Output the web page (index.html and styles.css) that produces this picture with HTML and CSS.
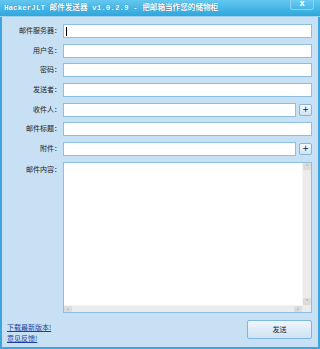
FILE: index.html
```html
<!DOCTYPE html>
<html lang="zh-CN">
<head>
    <meta charset="UTF-8">
    <meta name="viewport" content="width=device-width, initial-scale=1.0">
    <title>HackerJLT 邮件发送器</title>
    <link rel="stylesheet" href="styles.css">
</head>
<body>
<div class="window">
    <div class="titlebar">
        <span class="title">HackerJLT 邮件发送器 v1.0.2.9 - 把邮箱当作您的储物柜</span>
        <span class="close-btn">x</span>
    </div>
    <div class="content">
        <form class="form-holder">
            <label>邮件服务器：</label>
            <input type="text" class="caret">
            <label>用户名：</label>
            <input type="text">
            <label>密码：</label>
            <input type="password">
            <label>发送者：</label>
            <input type="text">
            <label>收件人：</label>
            <div class="with-btn">
                <input type="text">
                <span class="plus-btn">+</span>
            </div>
            <label>邮件标题：</label>
            <input type="text">
            <label>附件：</label>
            <div class="with-btn">
                <input type="text">
                <span class="plus-btn">+</span>
            </div>
            <label class="top">邮件内容：</label>
            <div class="memo">
                <textarea></textarea>
                <div class="vscroll">
                    <span class="arrow">&#708;</span>
                    <span class="arrow">&#709;</span>
                </div>
                <div class="hscroll">
                    <span class="arrow">&lsaquo;</span>
                    <span class="arrow">&rsaquo;</span>
                </div>
                <div class="corner"></div>
            </div>
        </form>
        <div class="footer">
            <div class="links">
                <a href="#">下载最新版本!</a>
                <a href="#">意见反馈!</a>
            </div>
            <span class="btn">发送</span>
        </div>
    </div>
</div>
</body>
</html>
```

FILE: styles.css
```css
* {
    box-sizing: border-box;
}

body {
    margin: 0;
    padding: 0;
    font-family: "Noto Sans CJK SC", "DejaVu Sans", sans-serif;
    background-color: #fff;
}

.window {
    width: 320px;
    height: 349px;
    display: flex;
    flex-direction: column;
    background-color: #c8e0f3;
    border: 2px solid #3fa5de;
    border-top: none;
}

.titlebar {
    height: 17px;
    margin: 0 -2px;
    display: flex;
    justify-content: space-between;
    background: linear-gradient(#62c8f0, #2fa6dc);
    border-bottom: 1px solid #9fd2f0;
}

.title {
    padding: 3px 0 0 4px;
    font-family: "Liberation Mono", "Noto Sans CJK SC", monospace;
    font-size: 7.6px;
    font-weight: bold;
    line-height: 10px;
    color: #fff;
    text-shadow: 0 0 1px #1a6f9e;
    white-space: nowrap;
}

.close-btn {
    width: 24px;
    height: 10px;
    margin-right: 6px;
    font-family: "DejaVu Sans", sans-serif;
    font-size: 8px;
    font-weight: bold;
    line-height: 8px;
    text-align: center;
    color: #fff;
    background: linear-gradient(#6ccdf2, #48b6e6);
    border: 1px solid #8fd3f3;
    border-top: none;
    border-radius: 0 0 3px 3px;
}

.content {
    flex: 1;
    padding: 7px 6px 0 0;
    display: flex;
    flex-direction: column;
}

.form-holder {
    display: grid;
    grid-template-columns: 59px 1fr;
    grid-template-rows: repeat(7, 14px) 151px;
    column-gap: 2px;
    row-gap: 5.7px;
}

.form-holder label {
    font-size: 7px;
    line-height: 12px;
    text-align: right;
    color: #222;
    white-space: nowrap;
}

.form-holder label.top {
    line-height: 10px;
    padding-top: 2px;
}

input[type="text"],
input[type="password"] {
    width: 100%;
    height: 14px;
    margin: 0;
    padding: 0 2px;
    border: 1px solid #8dbfe3;
    background-color: #fff;
    outline: none;
}

input.caret {
    background: #fff linear-gradient(#000, #000) no-repeat 2px 2px / 1px 9px;
}

.with-btn {
    display: flex;
    align-items: center;
    gap: 3px;
}

.plus-btn {
    flex: none;
    width: 13px;
    height: 12px;
    font-family: "DejaVu Sans", sans-serif;
    font-size: 8px;
    line-height: 10px;
    text-align: center;
    color: #222;
    background: linear-gradient(#f6fbff, #cfe2f3);
    border: 1px solid #86b6dc;
    border-radius: 2px;
}

.memo {
    height: 151px;
    display: grid;
    grid-template-columns: 1fr 9px;
    grid-template-rows: 1fr 7px;
    border: 1px solid #8dbfe3;
    background-color: #fff;
}

.memo textarea {
    border: none;
    resize: none;
    outline: none;
    background-color: #fff;
}

.vscroll {
    display: flex;
    flex-direction: column;
    justify-content: space-between;
    background-color: #ececec;
    border-left: 1px solid #f4f4f4;
}

.hscroll {
    display: flex;
    justify-content: space-between;
    background-color: #ececec;
    border-top: 1px solid #f4f4f4;
}

.corner {
    background-color: #ececec;
}

.arrow {
    width: 8px;
    height: 7px;
    font-family: "DejaVu Sans", sans-serif;
    font-size: 6px;
    line-height: 7px;
    text-align: center;
    color: #888;
    background-color: #dcdcdc;
    border-radius: 1px;
}

.hscroll .arrow {
    height: 6px;
    line-height: 6px;
}

.footer {
    margin-top: 7px;
    display: flex;
    justify-content: space-between;
    align-items: flex-start;
}

.links {
    display: flex;
    flex-direction: column;
    gap: 1px;
    padding: 2px 0 0 5px;
}

.links a {
    font-size: 7px;
    line-height: 10px;
    color: #1d3f9e;
    text-decoration: underline;
}

.btn {
    width: 65px;
    height: 19px;
    font-size: 7px;
    line-height: 17px;
    text-align: center;
    color: #222;
    background: linear-gradient(#eef6fd, #cfe3f4);
    border: 1px solid #7cb7e2;
    border-radius: 2px;
}
```
